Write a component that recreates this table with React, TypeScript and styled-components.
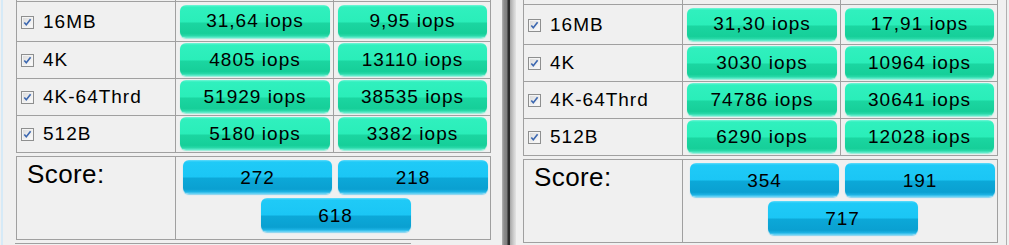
import React from "react";
import styled, { createGlobalStyle } from "styled-components";

type Row = { label: string; read: string; write: string };
type PanelData = { top: number; rows: Row[]; scores: [string, string, string] };

const panels: PanelData[] = [
  {
    top: 1,
    rows: [
      { label: "16MB", read: "31,64 iops", write: "9,95 iops" },
      { label: "4K", read: "4805 iops", write: "13110 iops" },
      { label: "4K-64Thrd", read: "51929 iops", write: "38535 iops" },
      { label: "512B", read: "5180 iops", write: "3382 iops" },
    ],
    scores: ["272", "218", "618"],
  },
  {
    top: 4,
    rows: [
      { label: "16MB", read: "31,30 iops", write: "17,91 iops" },
      { label: "4K", read: "3030 iops", write: "10964 iops" },
      { label: "4K-64Thrd", read: "74786 iops", write: "30641 iops" },
      { label: "512B", read: "6290 iops", write: "12028 iops" },
    ],
    scores: ["354", "191", "717"],
  },
];

const CheckBox = () => (
  <StyledCheck viewBox="0 0 13 13" width="13" height="13">
    <defs>
      <linearGradient id="cbFill" x1="0" y1="0" x2="1" y2="1">
        <stop offset="0" stopColor="#dcdcdc" />
        <stop offset="1" stopColor="#fbfbfb" />
      </linearGradient>
    </defs>
    <rect x="0.5" y="0.5" width="12" height="12" fill="#f4f4f4" stroke="#8e8f8f" />
    <rect x="2" y="2" width="9" height="9" fill="url(#cbFill)" />
    <path d="M3.3 6.4 L5.3 8.8 L9.6 3.2" fill="none" stroke="#3d68b0" strokeWidth="1.6" />
  </StyledCheck>
);

const Panel = ({ data }: { data: PanelData }) => (
  <StyledPanel>
    <StyledTable $top={data.top}>
      <StyledCutCell />
      <StyledCutCell />
      <StyledCutCell />
      {data.rows.map((row) => (
        <React.Fragment key={row.label}>
          <StyledLabelCell>
            <CheckBox />
            <span>{row.label}</span>
          </StyledLabelCell>
          <StyledValueCell>
            <StyledResultButton>{row.read}</StyledResultButton>
          </StyledValueCell>
          <StyledValueCell>
            <StyledResultButton>{row.write}</StyledResultButton>
          </StyledValueCell>
        </React.Fragment>
      ))}
    </StyledTable>
    <StyledScoreGroup>
      <StyledScoreLabel>Score:</StyledScoreLabel>
      <StyledScoreCell>
        <StyledScoreButton>{data.scores[0]}</StyledScoreButton>
        <StyledScoreButton>{data.scores[1]}</StyledScoreButton>
        <StyledScoreButton $wide>{data.scores[2]}</StyledScoreButton>
      </StyledScoreCell>
    </StyledScoreGroup>
  </StyledPanel>
);

export default function App() {
  return (
    <>
      <GlobalStyle />
      <StyledPage>
        <StyledWindowEdge />
        <StyledLeftSlot>
          <Panel data={panels[0]} />
          <StyledNextBar />
        </StyledLeftSlot>
        <StyledSplitter />
        <StyledRightSlot>
          <Panel data={panels[1]} />
        </StyledRightSlot>
        <StyledFrameLine />
      </StyledPage>
    </>
  );
}

const GlobalStyle = createGlobalStyle`
  html, body {
    margin: 0;
    padding: 0;
    background: #f0f0f0;
    overflow: hidden;
  }
  body {
    font-family: "Liberation Sans", Arial, sans-serif;
    color: #000;
  }
`;

const StyledPage = styled.div`
  display: flex;
  width: 1009px;
  height: 245px;
  overflow: hidden;
  background: #f0f0f0;
`;

const StyledWindowEdge = styled.div`
  width: 2px;
  margin-left: 1px;
  background: #d6eaf7;
  flex-shrink: 0;
`;

const StyledLeftSlot = styled.div`
  margin-left: 13px;
  display: flex;
  flex-direction: column;
`;

const StyledRightSlot = styled.div`
  margin-left: 7px;
`;

const StyledSplitter = styled.div`
  width: 14px;
  margin-left: 11px;
  flex-shrink: 0;
  background: linear-gradient(
    to right,
    #b4b4b4 0px,
    #a0a0a0 1px,
    #8c8c8c 2px,
    #7e7e7e 5px,
    #2c2c2c 6px,
    #2c2c2c 7.9px,
    #a6a6a6 8px,
    #bdbdbd 10px,
    #d2d2d2 12px,
    #e4e4e4 14px
  );
`;

const StyledFrameLine = styled.div`
  width: 1px;
  margin-left: 8px;
  background: #b0b0b0;
  flex-shrink: 0;
`;

const StyledPanel = styled.div`
  display: flex;
  flex-direction: column;
  gap: 3px;
`;

const StyledTable = styled.div<{ $top: number }>`
  display: grid;
  grid-template-columns: 158px 157px 156px;
  grid-template-rows: ${({ $top }) => $top}px 39px 36px 36px 36px;
  gap: 1px;
  padding: 0 1px 1px;
  background: #a0a0a0;
`;

const StyledCutCell = styled.div`
  background: #f0f0f0;
`;

const StyledLabelCell = styled.div`
  display: flex;
  align-items: center;
  gap: 9px;
  padding-left: 4px;
  background: #f0f0f0;
  font-size: 19px;
  letter-spacing: 1px;
`;

const StyledCheck = styled.svg`
  flex-shrink: 0;
  margin-top: 1px;
`;

const StyledValueCell = styled.div`
  display: flex;
  align-items: center;
  padding: 0 3px 0 4px;
  background: #f0f0f0;
`;

const StyledResultButton = styled.div`
  flex: 1;
  height: 33px;
  margin-top: -1px;
  display: flex;
  align-items: center;
  justify-content: center;
  border-radius: 6px;
  font-size: 19px;
  letter-spacing: 1px;
  background: linear-gradient(
    to bottom,
    #74f6d8 0px,
    #30f0be 2px,
    #2aeeb9 52%,
    #1bd6a1 54%,
    #16cf99 86%,
    #28d9a8 93%,
    #6cefd2 100%
  );
  box-shadow: 0 1px 1px rgba(110, 236, 205, 0.7);
`;

const StyledScoreGroup = styled.div`
  display: grid;
  grid-template-columns: 158px 314px;
  grid-template-rows: 82px;
  gap: 1px;
  padding: 1px;
  background: #a0a0a0;
`;

const StyledScoreLabel = styled.div`
  background: #f0f0f0;
  padding: 2px 0 0 10px;
  font-size: 26px;
  letter-spacing: 0.4px;
  line-height: 30px;
`;

const StyledScoreCell = styled.div`
  background: #f0f0f0;
  display: grid;
  grid-template-columns: 149px 150px;
  grid-auto-rows: 34px;
  column-gap: 6px;
  row-gap: 4px;
  padding: 3px 0 0 7px;
  align-content: start;
`;

const StyledScoreButton = styled.div<{ $wide?: boolean }>`
  grid-column: ${({ $wide }) => ($wide ? "1 / span 2" : "auto")};
  justify-self: center;
  width: ${({ $wide }) => ($wide ? "150px" : "100%")};
  display: flex;
  align-items: center;
  justify-content: center;
  border-radius: 6px;
  font-size: 19px;
  letter-spacing: 1px;
  padding-top: 2px;
  box-sizing: border-box;
  background: linear-gradient(
    to bottom,
    #62dcfb 0px,
    #1fcaf7 2px,
    #1bc6f5 50%,
    #0ca8d8 53%,
    #0aa0d1 86%,
    #1cb2e3 93%,
    #72d8f8 100%
  );
  box-shadow: 0 1px 1px rgba(90, 200, 240, 0.7);
`;

const StyledNextBar = styled.div`
  margin: 3px 0 0 -1px;
  width: 396px;
  height: 2px;
  border-top: 1px solid #a0a0a0;
`;
